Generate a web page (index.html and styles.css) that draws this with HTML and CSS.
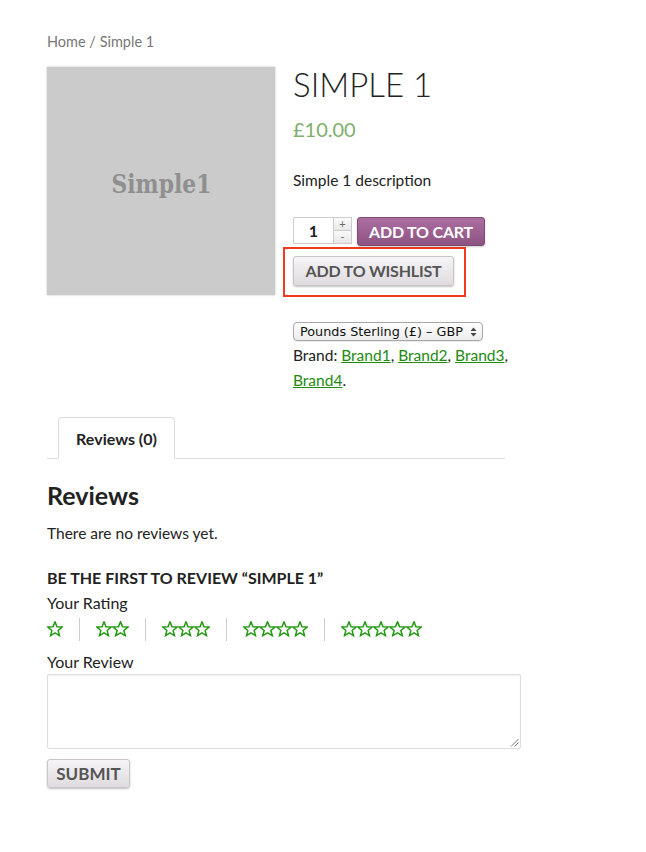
FILE: index.html
```html
<!DOCTYPE html>
<html lang="en">
<head>
<meta charset="utf-8">
<title>Simple 1</title>
<link rel="stylesheet" href="styles.css">
</head>
<body>
<div class="page">
  <nav class="breadcrumb">Home / Simple 1</nav>
  <div class="product">
    <div class="image"><span class="image-label">Simple1</span></div>
    <div class="summary">
      <h1 class="title">SIMPLE 1</h1>
      <p class="price">£10.00</p>
      <p class="desc">Simple 1 description</p>
      <form class="cart">
        <div class="qty">
          <span class="qty-input">1</span>
          <span class="qty-btns"><span class="qb">+</span><span class="qb">-</span></span>
        </div>
        <button type="button" class="btn-cart">ADD TO CART</button>
      </form>
      <div class="highlight">
        <button type="button" class="btn-grey btn-wish">ADD TO WISHLIST</button>
      </div>
      <div class="currency">
        <span class="select">Pounds Sterling (£) – GBP<span class="arrows"><svg width="7" height="10" viewBox="0 0 7 10"><path d="M3.5 0.5 L6.5 4 H0.5 Z M3.5 9.5 L6.5 6 H0.5 Z" fill="#444"/></svg></span></span>
      </div>
      <p class="brands">Brand: <a href="#">Brand1</a>, <a href="#">Brand2</a>, <a href="#">Brand3</a>, <a href="#">Brand4</a>.</p>
    </div>
  </div>

  <div class="tabs">
    <div class="tab">Reviews (0)</div>
  </div>

  <section class="reviews">
    <h2 class="reviews-title">Reviews</h2>
    <p class="noreviews">There are no reviews yet.</p>
    <h3 class="reply-title">BE THE FIRST TO REVIEW “SIMPLE 1”</h3>
    <p class="label">Your Rating</p>
    <div class="stars">
      <span class="group"><i class="star"></i></span>
      <span class="group"><i class="star"></i><i class="star"></i></span>
      <span class="group"><i class="star"></i><i class="star"></i><i class="star"></i></span>
      <span class="group"><i class="star"></i><i class="star"></i><i class="star"></i><i class="star"></i></span>
      <span class="group"><i class="star"></i><i class="star"></i><i class="star"></i><i class="star"></i><i class="star"></i></span>
    </div>
    <p class="label label-review">Your Review</p>
    <div class="textarea"><svg class="grip" width="9" height="9" viewBox="0 0 9 9"><path d="M8.5 1 L1 8.5 M8.5 4.5 L4.5 8.5" stroke="#777" stroke-width="1"/></svg></div>
    <button type="button" class="btn-grey btn-submit">SUBMIT</button>
  </section>
</div>
</body>
</html>
```

FILE: styles.css
```css
* { box-sizing: border-box; }
html, body { margin: 0; padding: 0; background: #fff; }
body {
  font-family: Lato, "Open Sans", sans-serif;
  color: #222;
  font-size: 15.5px;
}
.page { padding: 31px 0 40px 47px; width: 521px; }
p, h1, h2, h3 { margin: 0; }

.breadcrumb { font-size: 14.5px; color: #777; line-height: 22px; }

.product { display: flex; gap: 18px; margin-top: 14px; }
.image {
  width: 228px; height: 228px; flex: none;
  background: #cbcbcb;
  box-shadow: 0 0 2px rgba(0,0,0,0.25);
  display: flex; align-items: center; justify-content: center;
}
.image-label {
  font-family: "DejaVu Serif", serif; font-weight: bold;
  font-size: 26px; line-height: 30px; color: #8f8f8f;
  transform: translateY(3px) scaleX(0.84);
}
.summary { width: 222px; }
.title {
  font-weight: 300; font-size: 33px; line-height: 40px; color: #222;
  margin-top: -3px;
}
.price { color: #7fae6d; font-size: 20px; line-height: 24px; margin-top: 13px; }
.desc { margin-top: 29px; line-height: 20px; color: #222; }

.cart { display: flex; align-items: flex-start; margin-top: 27px; gap: 5px; }
.qty { display: flex; height: 27px; }
.qty-input {
  width: 40px; height: 27px; border: 1px solid #ccc; border-right: none;
  font-size: 16px; font-weight: bold; color: #222;
  display: flex; align-items: center; justify-content: center;
  border-radius: 2px 0 0 2px;
}
.qty-btns { display: flex; flex-direction: column; width: 19px; }
.qb {
  height: 13.5px; border: 1px solid #ccc; background: linear-gradient(#fafafa, #e8e8e8);
  font-size: 11px; line-height: 11px; color: #666; text-align: center;
}
.qb + .qb { border-top: none; }
.btn-cart {
  height: 29px; width: 128px; padding: 0;
  border: 1px solid #7d4a73; border-radius: 3px;
  background: linear-gradient(#ad6ea1, #8c5382);
  color: #fff; font-family: Lato, sans-serif; font-weight: bold; font-size: 16px;
  letter-spacing: -0.2px;
  box-shadow: 0 1px 2px rgba(0,0,0,0.2);
}
.highlight {
  margin: 1px 0 0 -10px; width: 183px; height: 50px;
  border: 2.5px solid #f43a1e;
  padding: 6.5px 0 0 8px;
}
.btn-grey {
  border: 1px solid #c9c5c9; border-radius: 3px;
  background: linear-gradient(#f6f4f6, #dfdbdf);
  color: #555; font-family: Lato, sans-serif; font-weight: bold;
  box-shadow: 0 1px 2px rgba(0,0,0,0.25);
  padding: 0;
}
.btn-wish { width: 161px; height: 30px; font-size: 16px; letter-spacing: -0.2px; }

.currency { margin-top: 24px; }
.select {
  display: inline-flex; align-items: center; justify-content: space-between;
  width: 190px; height: 19px; padding: 0 5px 0 6px;
  border: 1px solid #a6a6a6; border-radius: 4px;
  background: linear-gradient(#fff, #ececec);
  font-family: "DejaVu Sans", sans-serif; font-size: 12.8px; color: #111;
  box-shadow: 0 1px 1px rgba(0,0,0,0.08);
}
.arrows { display: flex; }
.brands { line-height: 25px; margin-top: 2px; color: #222; }
.brands a { color: #228b0f; text-decoration: underline; }

.tabs {
  margin-top: 24px; width: 458px;
  border-bottom: 1px solid #ddd;
  padding-left: 11px; display: flex;
}
.tab {
  width: 117px; height: 42px; margin-bottom: -1px;
  border: 1px solid #ddd; border-bottom: 1px solid #fff;
  border-radius: 4px 4px 0 0; background: #fff;
  font-weight: bold; font-size: 16px;
  display: flex; align-items: center; justify-content: center;
}

.reviews-title { font-weight: bold; font-size: 25px; line-height: 30px; margin-top: 21px; }
.noreviews { margin-top: 12px; line-height: 22px; }
.reply-title { font-weight: bold; font-size: 16px; line-height: 20px; margin-top: 24px; }
.label { font-size: 16px; line-height: 20px; margin-top: 5px; }
.stars { display: flex; margin-top: 4px; height: 24px; align-items: center; }
.group { display: flex; padding: 0 16px; border-left: 1px solid #ccc; height: 23px; align-items: center; }
.group:first-child { padding-left: 0; border-left: none; }
.star {
  width: 16.2px; height: 16px; display: block;
  background: no-repeat center/17px 16px url("data:image/svg+xml,%3Csvg xmlns='http://www.w3.org/2000/svg' viewBox='0 0 16 16'%3E%3Cpath d='M8 0.9 L10 5.7 L15.2 6 L11.2 9.4 L12.5 14.6 L8 11.8 L3.5 14.6 L4.8 9.4 L0.8 6 L6 5.7 Z' fill='none' stroke='%23239a12' stroke-width='1.5' stroke-linejoin='miter'/%3E%3C/svg%3E");
}
.label-review { margin-top: 11px; }
.textarea {
  margin-top: 2px; width: 474px; height: 75px;
  border: 1px solid #ddd; border-radius: 2px;
  box-shadow: inset 0 1px 2px rgba(0,0,0,0.06);
  position: relative;
}
.grip { position: absolute; right: 1px; bottom: 1px; }
.btn-submit { margin-top: 10px; width: 83px; height: 29px; font-size: 17px; display: block; }
```
